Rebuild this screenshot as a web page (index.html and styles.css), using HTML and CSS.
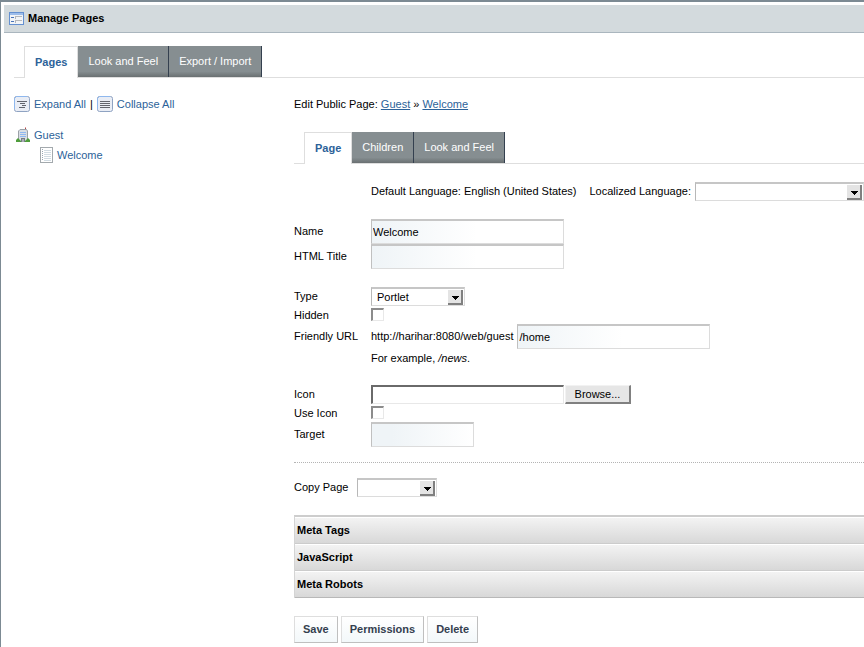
FILE: index.html
```html
<!DOCTYPE html>
<html lang="en">
<head>
    <meta charset="UTF-8">
    <meta name="viewport" content="width=device-width, initial-scale=1.0">
    <title>Manage Pages</title>
    <link rel="stylesheet" href="styles.css">
</head>
<body>
    <div class="portlet">
        <header class="portlet-title">
            <svg class="title-icon" width="15" height="13" viewBox="0 0 15 13" shape-rendering="crispEdges">
                <rect width="15" height="13" fill="#6490d0"/>
                <rect x="1" y="1" width="13" height="2" fill="#9dbdea"/>
                <rect x="1" y="3" width="13" height="9" fill="#f1f4f7"/>
                <path d="M2 5.500h3M2 9.500h3" stroke="#4a74b8"/>
                <path d="M6.500 7V4.500H13M6.500 11V8.500H13" fill="none" stroke="#b4b7bb"/>
            </svg>
            <h1>Manage Pages</h1>
        </header>

        <div class="portlet-body">
            <nav class="tabs">
                <a href="#" class="tab current">Pages</a>
                <a href="#" class="tab">Look and Feel</a>
                <a href="#" class="tab">Export / Import</a>
            </nav>

            <div class="columns">
                <!-- Page tree -->
                <aside class="tree">
                    <div class="tree-actions">
                        <a href="#">
                            <svg width="16" height="16" viewBox="0 0 16 16">
                                <rect x=".5" y=".5" width="15" height="15" rx="2" fill="#e9edf5" stroke="#8fa3c2"/>
                                <path d="M.5 13V2.500L2.500.5H13" fill="none" stroke="#8fb8ee"/>
                                <path d="M3 5.500h10M6 7.500h5M8 9.500h4M5 11.500h6" stroke="#62656e" shape-rendering="crispEdges"/>
                            </svg>
                            Expand All</a>
                        <span>|</span>
                        <a href="#">
                            <svg width="16" height="16" viewBox="0 0 16 16">
                                <rect x=".5" y=".5" width="15" height="15" rx="2" fill="#e9edf5" stroke="#8fa3c2"/>
                                <path d="M.5 13V2.500L2.500.5H13" fill="none" stroke="#8fb8ee"/>
                                <path d="M3 5.500h10M3 7.500h10M3 9.500h10M3 11.500h10" stroke="#62656e" shape-rendering="crispEdges"/>
                            </svg>
                            Collapse All</a>
                    </div>
                    <ul>
                        <li>
                            <a href="#">
                                <svg width="14" height="16" viewBox="0 0 14 16">
                                    <path d="M9.500 1v3" stroke="#9a5050"/>
                                    <path d="M9 .5h1v1h-1z" fill="#c04040"/>
                                    <path d="M2.500 14.500V4L4 2.500h6.500L11.500 4v10.500z" fill="#d9dee4" stroke="#9ba1a8"/>
                                    <path d="M4 5.500h6M4 7.500h6M4 9.500h6" stroke="#8fb8f2" shape-rendering="crispEdges"/>
                                    <path d="M5 15v-4h4v4z" fill="#777d84"/>
                                    <path d="M6 15v-3h2v3z" fill="#a9aeb4"/>
                                    <path d="M0 15v-2l2-2 3 3v1zM9 15v-1l3-3 2 2v2z" fill="#4f9d3c"/>
                                </svg>
                                Guest</a>
                            <ul>
                                <li>
                                    <a href="#">
                                        <svg width="13" height="16" viewBox="0 0 13 16" shape-rendering="crispEdges">
                                            <rect x=".5" y=".5" width="12" height="15" fill="#fff" stroke="#a3a9ad"/>
                                            <path d="M2.500 2v12" stroke="#9aa7b3" stroke-dasharray="1 1"/>
                                            <path d="M4 3.500h7M4 5.500h7M4 7.500h7M4 9.500h7M4 11.500h7M4 13.500h7" stroke="#d2dce3"/>
                                        </svg>
                                        Welcome</a>
                                </li>
                            </ul>
                        </li>
                    </ul>
                </aside>

                <!-- Edit form -->
                <main class="editor">
                    <p class="breadcrumb">Edit Public Page: <a href="#">Guest</a> » <a href="#">Welcome</a></p>

                    <nav class="tabs">
                        <a href="#" class="tab current">Page</a>
                        <a href="#" class="tab">Children</a>
                        <a href="#" class="tab">Look and Feel</a>
                    </nav>

                    <form>
                        <div class="group language">
                            <span>Default Language: English (United States)</span>
                            <label for="language">Localized Language:</label>
                            <select id="language"><option></option></select>
                        </div>

                        <div class="group">
                            <div class="row">
                                <label for="name">Name</label>
                                <input type="text" id="name" class="text" value="Welcome">
                            </div>
                            <div class="row">
                                <label for="html-title">HTML Title</label>
                                <input type="text" id="html-title" class="text">
                            </div>
                        </div>

                        <div class="group">
                            <div class="row">
                                <label for="type">Type</label>
                                <select id="type" class="type-select"><option>Portlet</option></select>
                            </div>
                            <div class="row check-row">
                                <label for="hidden">Hidden</label>
                                <input type="checkbox" id="hidden">
                            </div>
                            <div class="row">
                                <label for="friendly-url">Friendly URL</label>
                                <span class="url-prefix">http://harihar:8080/web/guest</span>
                                <input type="text" id="friendly-url" class="text" value="/home">
                            </div>
                            <p class="hint">For example, <em>/news</em>.</p>
                        </div>

                        <div class="group">
                            <div class="row">
                                <label for="icon">Icon</label>
                                <input type="text" id="icon" class="file">
                                <button type="button" class="browse">Browse...</button>
                            </div>
                            <div class="row check-row">
                                <label for="use-icon">Use Icon</label>
                                <input type="checkbox" id="use-icon">
                            </div>
                            <div class="row">
                                <label for="target">Target</label>
                                <input type="text" id="target" class="text short">
                            </div>
                        </div>

                        <div class="copy-page">
                            <label for="copy-page">Copy Page</label>
                            <select id="copy-page" class="copy-select"><option></option></select>
                        </div>

                        <div class="panels">
                            <h2>Meta Tags</h2>
                            <h2>JavaScript</h2>
                            <h2>Meta Robots</h2>
                        </div>

                        <div class="buttons">
                            <button type="button">Save</button>
                            <button type="button">Permissions</button>
                            <button type="button">Delete</button>
                        </div>
                    </form>
                </main>
            </div>
        </div>
    </div>
</body>
</html>
```

FILE: styles.css
```css
* {
    box-sizing: border-box;
}
body {
    margin: 0;
    font: 11px/18px "Liberation Sans", Arial, sans-serif;
    color: #000;
    background-color: #fff;
    overflow-x: hidden;
}
h1, h2, p, ul {
    margin: 0;
    padding: 0;
    font-size: 11px;
}
ul {
    list-style: none;
}
a {
    color: #2c6299;
    text-decoration: none;
}
svg {
    flex: none;
}
input, select, button {
    font: inherit;
    color: inherit;
    margin: 0;
    border-radius: 0;
}
.portlet {
    min-height: 100vh;
    border-top: 2px solid #7c8a93;
    border-left: 1px solid #7c8a93;
    padding: 3px 0 0 3px;
}
.portlet-title {
    display: flex;
    align-items: center;
    gap: 4px;
    height: 28px;
    padding: 0 0 1px 5px;
    background-color: #d3dadd;
    border-bottom: 1px solid #aab6be;
}
.portlet-body {
    padding: 13px 0 0 10px;
}

/* Tabs */
.tabs {
    display: flex;
    height: 32px;
    padding-left: 10px;
    border-bottom: 1px solid #dedede;
}
.tab {
    height: 31px;
    padding: 0 10px;
    line-height: 31px;
    color: #fff;
    background: linear-gradient(#868e91 82%, #6a7072);
    border-right: 1px solid #34404f;
}
.tab.current {
    height: 32px;
    color: #2c6299;
    font-weight: bold;
    background: #fff;
    border: 1px solid #dedede;
    border-bottom: 0;
}
.columns {
    display: grid;
    grid-template-columns: 280px 1fr;
    padding-top: 17px;
}

/* Page tree */
.tree-actions {
    display: flex;
    gap: 4px;
}
.tree a {
    display: flex;
    align-items: center;
    gap: 4px;
}
.tree ul {
    line-height: 20px;
}
.tree-actions + ul {
    padding: 12px 0 0 2px;
}
.tree ul ul {
    padding-left: 24px;
}

/* Form */
.breadcrumb a {
    text-decoration: underline;
}
.editor .tabs {
    margin-top: 19px;
}
.group {
    margin-top: 18px;
}
.row {
    display: flex;
    align-items: center;
}
.row > label {
    width: 77px;
}
.row > label, .url-prefix, .language span, .language label, .copy-page label {
    padding-bottom: 1px;
}
.check-row {
    height: 18px;
}
.check-row > label {
    padding-bottom: 0;
}
.language {
    display: flex;
    align-items: center;
    padding-left: 77px;
    white-space: nowrap;
}
.language label {
    margin: 0 4px 0 13px;
}
.language select {
    flex: 1;
}
.text {
    width: 193px;
    height: 25px;
    padding: 0 1px 1px;
    border: 1px solid #dcdcdc;
    border-top: 2px solid #c6c6c6;
    border-left-color: #c0c0c0;
    background: linear-gradient(90deg, #eff4f7, #fff 55%);
}
.short {
    width: 103px;
    background: linear-gradient(90deg, #eff4f7 20%, #fff);
}
.url-prefix {
    margin-right: 4px;
}
.hint {
    padding-left: 77px;
}
select {
    appearance: none;
    height: 19px;
    padding: 0 18px 0 5px;
    line-height: 15px;
    border: 1px solid #dcdcdc;
    border-top: 2px solid #c6c6c6;
    border-left-color: #b8b8b8;
    background: #fff url("data:image/svg+xml,%3Csvg xmlns='http://www.w3.org/2000/svg' width='15' height='15' shape-rendering='crispEdges'%3E%3Crect width='15' height='15' fill='%23808080'/%3E%3Crect width='13' height='13' fill='%23e4e4e4'/%3E%3Cpath d='M4 6h7v1h-1v1h-1v1h-1v1h-1v-1h-1v-1h-1v-1h-1z'/%3E%3C/svg%3E") no-repeat right 1px center;
}
.type-select {
    width: 94px;
}
.copy-select {
    width: 80px;
}
input[type="checkbox"] {
    appearance: none;
    width: 13px;
    height: 13px;
    margin-bottom: 1px;
    background-color: #fff;
    border: 1px solid #e8e8e8;
    border-top: 2px solid #8c8c8c;
    border-left: 2px solid #8c8c8c;
}
.file {
    width: 193px;
    height: 19px;
    background-color: #fff;
    border: 1px solid #e8e8e8;
    border-top: 2px solid #6a6a6a;
    border-left: 2px solid #6a6a6a;
}
.browse {
    width: 66px;
    height: 19px;
    margin-left: 1px;
    padding: 0;
    line-height: 15px;
    background-color: #e6e6e6;
    border: 1px solid #f2f2f2;
    border-right: 2px solid #808080;
    border-bottom: 2px solid #808080;
}
.copy-page {
    display: flex;
    align-items: center;
    gap: 9px;
    margin-top: 15px;
    padding-top: 15px;
    border-top: 1px dotted #b4b4b4;
}

/* Collapsible panels */
.panels {
    margin-top: 18px;
    border-top: 2px solid #cdcdcd;
    border-left: 1px solid #d4d4d4;
}
.panels h2 {
    height: 27px;
    padding-left: 2px;
    line-height: 25px;
    background: linear-gradient(#f3f3f3, #d8d8d8);
    border-top: 1px solid #fff;
    border-bottom: 1px solid #cccccc;
}
.panels h2:last-child {
    border-bottom-color: #b8b8b8;
}
.buttons {
    display: flex;
    gap: 3px;
    margin-top: 18px;
}
.buttons button {
    height: 27px;
    padding: 0 8px 1px;
    font-weight: bold;
    color: #34404f;
    background: linear-gradient(#fff, #f3f8fa);
    border: 1px solid #dedede;
    border-right-color: #bfbfbf;
    border-bottom-color: #bfbfbf;
}
```
